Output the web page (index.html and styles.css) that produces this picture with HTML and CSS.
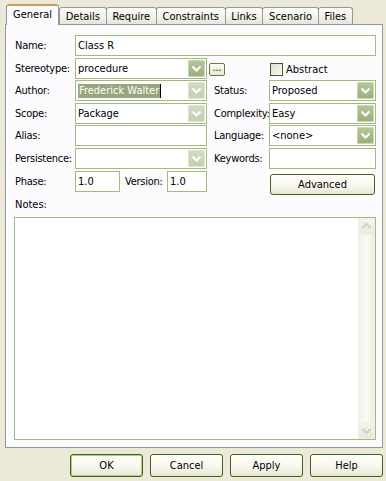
FILE: index.html
```html
<!DOCTYPE html>
<html lang="en">
<head>
  <meta charset="UTF-8" />
  <title>Class Properties</title>
  <link rel="stylesheet" href="styles.css">
</head>
<body>
  <div class="dialog">
    <div class="tabs">
      <div class="tab active">General</div>
      <div class="tab">Details</div>
      <div class="tab">Require</div>
      <div class="tab">Constraints</div>
      <div class="tab">Links</div>
      <div class="tab">Scenario</div>
      <div class="tab">Files</div>
    </div>

    <div class="panel">
      <div class="form">
        <label class="lbl">Name:</label>
        <div class="field span-all">Class R</div>

        <label class="lbl">Stereotype:</label>
        <div class="combo">
          <span class="val">procedure</span>
          <span class="drop"><svg width="17" height="17" viewBox="0 0 17 17"><polyline points="4.5,6.5 8.5,10.5 12.5,6.5" fill="none" stroke="#fff" stroke-width="2.2"/></svg></span>
        </div>
        <div class="more-cell"><span class="dots">...</span></div>
        <div class="check"><span class="box"></span>Abstract</div>

        <label class="lbl">Author:</label>
        <div class="combo">
          <span class="val"><span class="sel">Frederick Walter</span><span class="caret"></span></span>
          <span class="drop dim"><svg width="17" height="17" viewBox="0 0 17 17"><polyline points="4.5,6.5 8.5,10.5 12.5,6.5" fill="none" stroke="#fff" stroke-width="2.2"/></svg></span>
        </div>
        <span></span>
        <label class="lbl">Status:</label>
        <div class="combo">
          <span class="val">Proposed</span>
          <span class="drop"><svg width="17" height="17" viewBox="0 0 17 17"><polyline points="4.5,6.5 8.5,10.5 12.5,6.5" fill="none" stroke="#fff" stroke-width="2.2"/></svg></span>
        </div>

        <label class="lbl">Scope:</label>
        <div class="combo">
          <span class="val">Package</span>
          <span class="drop dim"><svg width="17" height="17" viewBox="0 0 17 17"><polyline points="4.5,6.5 8.5,10.5 12.5,6.5" fill="none" stroke="#fff" stroke-width="2.2"/></svg></span>
        </div>
        <span></span>
        <label class="lbl">Complexity:</label>
        <div class="combo">
          <span class="val">Easy</span>
          <span class="drop"><svg width="17" height="17" viewBox="0 0 17 17"><polyline points="4.5,6.5 8.5,10.5 12.5,6.5" fill="none" stroke="#fff" stroke-width="2.2"/></svg></span>
        </div>

        <label class="lbl">Alias:</label>
        <div class="field"></div>
        <span></span>
        <label class="lbl">Language:</label>
        <div class="combo">
          <span class="val">&lt;none&gt;</span>
          <span class="drop"><svg width="17" height="17" viewBox="0 0 17 17"><polyline points="4.5,6.5 8.5,10.5 12.5,6.5" fill="none" stroke="#fff" stroke-width="2.2"/></svg></span>
        </div>

        <label class="lbl">Persistence:</label>
        <div class="combo">
          <span class="val"></span>
          <span class="drop dim"><svg width="17" height="17" viewBox="0 0 17 17"><polyline points="4.5,6.5 8.5,10.5 12.5,6.5" fill="none" stroke="#fff" stroke-width="2.2"/></svg></span>
        </div>
        <span></span>
        <label class="lbl">Keywords:</label>
        <div class="field"></div>

        <label class="lbl">Phase:</label>
        <div class="phase-row">
          <div class="field phase">1.0</div>
          <label class="lbl version">Version:</label>
          <div class="field ver">1.0</div>
        </div>
        <span></span>
        <span></span>
        <div class="adv-cell"><button class="btn advanced">Advanced</button></div>
      </div>

      <div class="notes-label">Notes:</div>
      <div class="notes">
        <div class="notes-text"></div>
        <div class="scrollbar">
          <div class="sb-btn"><svg width="17" height="17" viewBox="0 0 17 17"><polyline points="4.5,10 8.5,6 12.5,10" fill="none" stroke="#cfd2c2" stroke-width="2.2"/></svg></div>
          <div class="sb-track"></div>
          <div class="sb-btn"><svg width="17" height="17" viewBox="0 0 17 17"><polyline points="4.5,7 8.5,11 12.5,7" fill="none" stroke="#cfd2c2" stroke-width="2.2"/></svg></div>
        </div>
      </div>
    </div>

    <div class="actions">
      <button class="btn default">OK</button>
      <button class="btn">Cancel</button>
      <button class="btn">Apply</button>
      <button class="btn">Help</button>
    </div>
  </div>
</body>
</html>
```

FILE: styles.css
```css
body {
  margin: 0;
  background: #ece9d8;
  font-family: 'DejaVu Sans Condensed', 'DejaVu Sans', sans-serif;
  font-stretch: condensed;
  font-size: 11px;
  color: #000;
}

.dialog {
  width: 386px;
  height: 481px;
  padding: 0 0 0 5px;
  box-sizing: border-box;
}

/* tab strip */
.tabs {
  display: flex;
  align-items: flex-end;
  height: 24px;
  padding-left: 1px;
  box-sizing: border-box;
}

.tab {
  height: 17px;
  padding: 0 5.7px;
  line-height: 17px;
  border: 1px solid #919b9c;
  border-bottom: none;
  border-radius: 3px 3px 0 0;
  background: linear-gradient(#fefefd, #f4f3ee 50%, #e7e5da);
  box-sizing: border-box;
  margin-right: -1px;
}

.tab.active {
  height: 21px;
  padding: 0 6px;
  line-height: 17px;
  background: #fcfcfe;
  border-top: 2px solid #c7a25f;
  margin-bottom: -1px;
  margin-right: 0;
  position: relative;
  z-index: 1;
}

/* panel */
.panel {
  width: 378px;
  height: 424px;
  border: 1px solid #919b9c;
  background: #fcfcfe;
  box-sizing: border-box;
  padding: 10px 0 0 9px;
}

.form {
  display: grid;
  grid-template-columns: 60px 132px 7px 55px 107px;
  grid-auto-rows: 21px;
  row-gap: 1.6px;
  align-items: center;
}

.lbl {
  line-height: 21px;
  white-space: nowrap;
  letter-spacing: -0.25px;
}

.field,
.combo {
  height: 21px;
  border: 1px solid #a5b97f;
  background: #fff;
  box-sizing: border-box;
  line-height: 19px;
  padding-left: 2px;
}

.span-all {
  grid-column: 2 / 6;
}

.combo {
  display: flex;
  justify-content: space-between;
  padding: 1px 1px 1px 2px;
  line-height: 17px;
}

.val {
  display: flex;
  align-items: center;
}

.sel {
  background: #97a67c;
  color: #fff;
  padding: 0 1px;
  line-height: 14px;
}

.caret {
  width: 1px;
  height: 14px;
  background: #000;
}

.drop {
  width: 17px;
  height: 17px;
  border-radius: 2px;
  background: linear-gradient(#b6c79a, #9aae79);
  box-shadow: inset 0 0 0 1px #c9d6b3;
}

.drop.dim {
  background: linear-gradient(#d3dcc4, #c4cfb0);
  box-shadow: inset 0 0 0 1px #dde4d1;
}

.drop svg,
.sb-btn svg {
  display: block;
}

.more-cell {
  grid-column: 3 / 5;
  padding-left: 2px;
}

.dots {
  display: inline-block;
  width: 16px;
  height: 13px;
  border: 1px solid #6b7d3c;
  border-radius: 2px;
  background: linear-gradient(#fffff6, #e9e6d2);
  box-sizing: border-box;
  line-height: 7px;
  text-align: center;
  font-size: 10px;
  margin-top: 2px;
}

.check {
  display: flex;
  align-items: center;
  padding-left: 1px;
  margin-top: 3px;
}

.box {
  width: 13px;
  height: 13px;
  border: 1px solid #3e5a22;
  background: linear-gradient(135deg, #dcdbd3, #fbfbf8);
  box-sizing: border-box;
  margin-right: 3px;
}

.phase-row {
  display: flex;
  align-items: center;
}

.phase {
  width: 45px;
}

.version {
  width: 42px;
  padding-left: 5px;
  box-sizing: content-box;
}

.ver {
  width: 40px;
}

.adv-cell {
  padding-left: 1px;
  margin-top: 6px;
}

/* buttons */
.btn {
  font-family: inherit;
  font-stretch: inherit;
  font-size: 11px;
  color: #000;
  height: 23px;
  width: 73px;
  border: 1px solid #3f6419;
  border-radius: 3px;
  background: linear-gradient(#fffffa, #f7f6ec 60%, #e8e5d4);
  padding: 0;
}

.btn.advanced {
  width: 105px;
  height: 21px;
}

.btn.default {
  box-shadow: inset 0 0 0 1px #b4c98a;
}

/* notes */
.notes-label {
  line-height: 13px;
  margin-top: 6px;
}

.notes {
  display: flex;
  width: 362px;
  height: 223px;
  margin: 6px 0 0 -1px;
  border: 1px solid #a5b97f;
  background: #fff;
  box-sizing: border-box;
}

.notes-text {
  flex: 1;
}

.scrollbar {
  width: 17px;
  display: flex;
  flex-direction: column;
  background: linear-gradient(90deg, #f1efe6, #fbfaf6 50%, #eeece2);
}

.sb-btn {
  height: 17px;
  border-radius: 2px;
  background: linear-gradient(#f6f5ee, #e9e8de);
  box-shadow: inset 0 0 0 1px #f0efe8;
}

.sb-track {
  flex: 1;
}

.actions {
  display: flex;
  justify-content: flex-end;
  gap: 7px;
  padding: 6px 3px 0 0;
}
```
